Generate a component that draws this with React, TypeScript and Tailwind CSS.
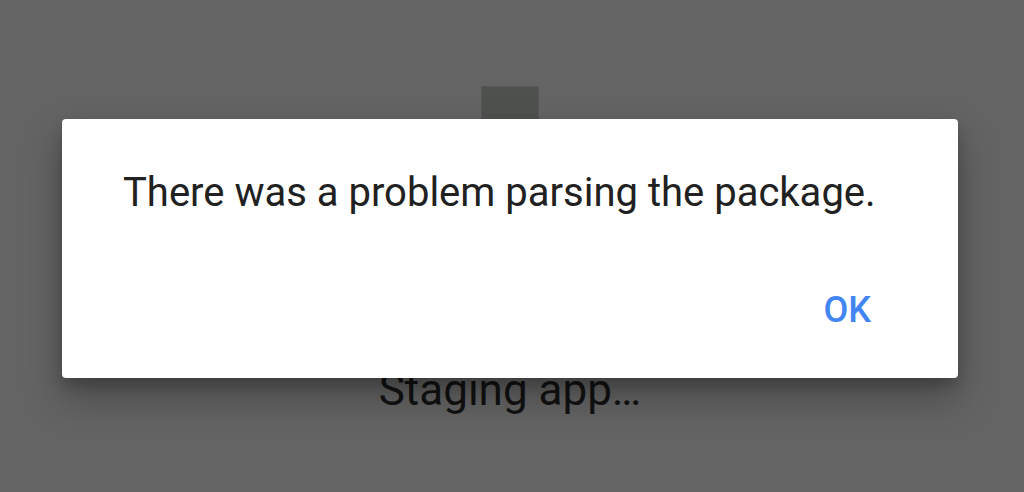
import React from 'react';

function App() {
  return (
    <div
      className="relative w-full h-[492px] overflow-hidden bg-[#646464]"
      style={{ fontFamily: 'Roboto, "Noto Sans", sans-serif' }}
    >
      {/* Underlying screen */}
      <div className="flex flex-col items-center pt-[86px] pr-[4px]">
        <div className="w-[58px] h-[60px] bg-[#4f514f] border border-[#565856]" />
        <div className="mt-[218px] text-[44px] leading-[1.2] text-[#121212]">Staging app…</div>
      </div>

      {/* Dialog */}
      <div className="absolute left-[62px] top-[119px] w-[896px] h-[259px] bg-white rounded-[4px] shadow-[0_20px_40px_rgba(0,0,0,0.28),0_8px_14px_rgba(0,0,0,0.18)] flex flex-col pt-[50px] pl-[61px] pr-[87px]">
        <p className="text-[40px] leading-[48px] text-[#212121] whitespace-nowrap">
          There was a problem parsing the package.
        </p>
        <div className="flex justify-end mt-[75px]">
          <button className="text-[36px] leading-[36px] font-medium text-[#4285f4]">OK</button>
        </div>
      </div>
    </div>
  );
}

export default App;
